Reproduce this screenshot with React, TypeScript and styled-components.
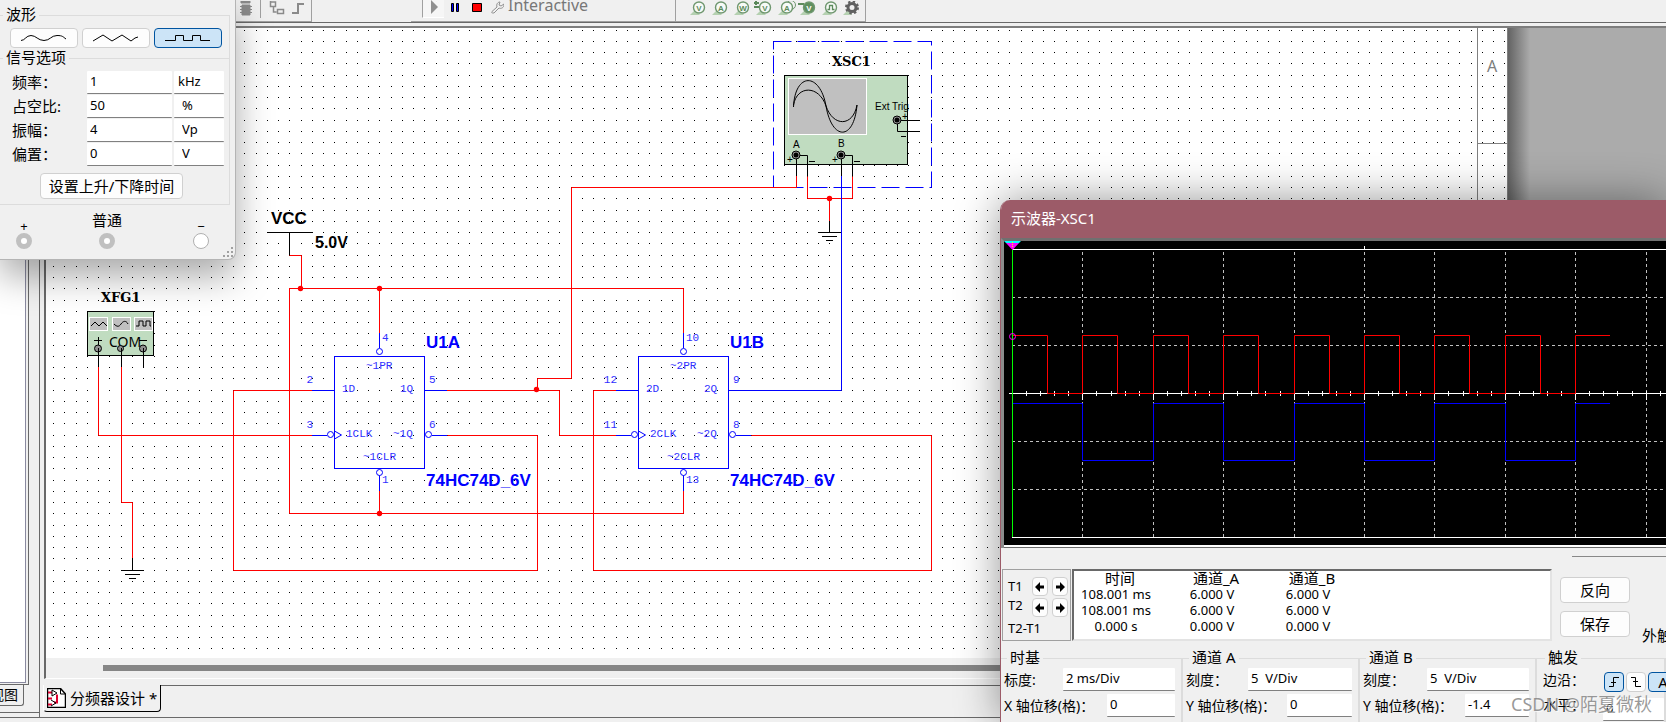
import React from 'react';
import styled, { createGlobalStyle, css } from 'styled-components';

const CJK = `"Noto Sans", "Noto Sans CJK SC", sans-serif`;
const FACE = '#f0f0f0';
const DARK = '#696969';
const ACCENT = '#0054a0';

const GlobalStyle = createGlobalStyle`
  * { box-sizing: border-box; }
  body { margin: 0; overflow: hidden; background: ${FACE}; color: #000; font: 13px/16px ${CJK}; }
  button, input { font: inherit; color: inherit; margin: 0; }
  svg { display: block; }
`;

/* ---------- main window ---------- */

const Desktop = styled.div`
  position: relative;
  display: flex;
  flex-direction: column;
  height: 100vh;
  overflow: hidden;
`;

const Toolbar = styled.header`
  display: flex;
  flex: none;
  height: 23px;
  padding-left: 235px;
  border-bottom: 1px solid ${DARK};
`;

const ToolGroup = styled.div<{ $width: number; $lead?: number }>`
  display: flex;
  flex: none;
  width: ${p => p.$width}px;
  height: 22px;
  margin-left: ${p => p.$lead ?? 0}px;
  border-right: 1px solid #a0a0a0;
  border-bottom: 1px solid #a0a0a0;
`;

const ToolButton = styled.button<{ $width: number; $boxed?: boolean }>`
  flex: none;
  width: ${p => p.$width}px;
  height: ${p => (p.$boxed ? 18 : 21)}px;
  padding: 0;
  border: 0;
  background: none;
  & > svg { margin-top: -2px; }
  ${p => p.$boxed && css`
    background: #f6f6f6;
    border-left: 1px solid #a0a0a0;
    border-bottom: 1px solid #fff;
  `}
`;

const Divider = styled.span`
  width: 1px;
  height: 18px;
  background: #a0a0a0;
`;

const SimulationName = styled.span`
  color: #777;
  font-size: 16px;
  line-height: 11px;
  padding-left: 4px;
`;

const Workspace = styled.div`
  display: flex;
  flex: 1;
  min-height: 0;
`;

const Dock = styled.aside`
  display: flex;
  flex-direction: column;
  flex: none;
  width: 39px;
  margin-bottom: 4px;
  border-bottom: 1px solid ${DARK};
`;

const DockPane = styled.div`
  flex: 1;
  width: 29px;
  border-right: 1px solid ${DARK};
  border-bottom: 1px solid ${DARK};
  padding: 0 2px 2px 0;
  &::before {
    content: '';
    display: block;
    height: 100%;
    background: #fff;
    border-right: 1px solid #8a8aa0;
    border-bottom: 1px solid #8a8aa0;
  }
`;

const DockTab = styled.button`
  display: flex;
  justify-content: flex-end;
  align-items: center;
  width: 24px;
  height: 21px;
  margin-bottom: 6px;
  padding: 0 5px 0 0;
  overflow: hidden;
  background: ${FACE};
  border: 1px solid ${DARK};
  border-width: 0 1px 1px 0;
  border-radius: 0 0 3px 0;
  font-size: 14px;
  white-space: nowrap;
`;

const Mdi = styled.main`
  display: flex;
  flex-direction: column;
  flex: 1;
  min-width: 0;
  padding-top: 3px;
  border-left: 1px solid ${DARK};
`;

const Viewport = styled.div`
  display: flex;
  flex-direction: column;
  flex: 1;
  min-height: 0;
  margin-left: 4px;
  border: 2px solid ${DARK};
  border-right: 0;
  border-bottom: 1px solid #fff;
  border-top-color: #7d7d7d;
`;

const SheetArea = styled.div`
  display: flex;
  flex: 1;
  min-height: 0;
  overflow: hidden;
  background: #ababab;
`;

const Sheet = styled.svg`
  flex: none;
  background: #fff;
`;

const SheetEdge = styled.div`
  width: 22px;
  background: linear-gradient(to right, #636363, #ababab);
`;

const ScrollTrack = styled.div`
  flex: none;
  height: 20px;
  padding: 7px 30% 7px 57px;
  background: ${FACE};
`;

const ScrollThumb = styled.div`
  height: 6px;
  background: #868686;
`;

const TabStrip = styled.div`
  display: flex;
  flex: none;
  height: 38px;
  padding-top: 6px;
`;

const SheetTab = styled.button`
  display: flex;
  align-items: center;
  gap: 4px;
  height: 27px;
  margin-left: 3px;
  padding: 0 3px;
  border: solid #000;
  border-width: 0 1px 1px 1px;
  border-left-color: #fff;
  border-radius: 0 0 4px 4px;
  background: ${FACE};
  font-size: 15px;
  white-space: nowrap;
`;

const StripRest = styled.div`
  flex: 1;
  border-top: 1px solid ${DARK};
`;

const StatusBar = styled.footer`
  flex: none;
  height: 5px;
  border-top: 1px solid ${DARK};
`;

/* ---------- shared window controls ---------- */

const Group = styled.fieldset<{ $indent: number }>`
  min-width: 0;
  margin: 0;
  padding: 0;
  border: 1px solid #dcdcdc;
  border-left-width: 0;
  & > legend {
    height: 20px;
    margin-left: ${p => p.$indent}px;
    padding: 0 3px;
    font-size: 15px;
    line-height: 18px;
  }
`;

const Field = styled.input<{ $pad?: number }>`
  width: 100%;
  min-width: 0;
  height: 23px;
  padding: 0 0 2px ${p => p.$pad ?? 3}px;
  border: 0;
  border-bottom: 1px solid #808080;
  border-radius: 1px;
  outline: 0;
  background: #fff;
`;

const PushButton = styled.button<{ $active?: boolean }>`
  display: flex;
  align-items: center;
  justify-content: center;
  padding: 0;
  border: 1px solid ${p => (p.$active ? ACCENT : '#d0d0d0')};
  border-radius: 4px;
  background: ${p => (p.$active ? '#cce4f7' : '#fdfdfd')};
  font-size: 15px;
  white-space: nowrap;
`;

/* ---------- function generator window ---------- */

const Generator = styled.section`
  position: absolute;
  top: 0;
  left: 0;
  width: 236px;
  height: 260px;
  padding: 5px 5px 0 0;
  background: ${FACE};
  border: 1px solid #b4b4b4;
  border-width: 0 1px 1px 0;
  border-radius: 0 0 8px 0;
  box-shadow: 0 16px 36px rgba(0, 0, 0, 0.34);
`;

const WaveGroup = styled(Group)`
  border-bottom-width: 0;
  padding-bottom: 11px;
`;

const SignalGroup = styled(Group)`
  margin-top: -11px;
  padding-bottom: 5px;
`;

const WaveButtons = styled.div`
  display: flex;
  gap: 4px;
  padding: 3px 0 0 10px;
`;

const WaveButton = styled(PushButton)`
  width: 68px;
  height: 20px;
`;

const ParamRow = styled.div`
  display: grid;
  grid-template-columns: 75px 85px 52px;
  height: 24px;
  padding-left: 12px;
  & > label { font-size: 15px; line-height: 22px; white-space: nowrap; }
  & > :last-child { padding-left: 2px; }
`;

const Params = styled.div`
  padding-top: 3px;
`;

const EdgeTimeButton = styled(PushButton)`
  width: 143px;
  height: 26px;
  margin: 6px 0 0 40px;
`;

const Terminals = styled.div`
  display: grid;
  grid-template-columns: 48px 118px 70px;
  padding-top: 7px;
`;

const Terminal = styled.label<{ $sign?: boolean }>`
  display: flex;
  flex-direction: column;
  align-items: center;
  gap: 1px;
  & > span {
    height: 20px;
    font-size: ${p => (p.$sign ? 13 : 15)}px;
    line-height: ${p => (p.$sign ? 28 : 16)}px;
  }
  & > input {
    appearance: none;
    width: 16px;
    height: 16px;
    border: 5px solid #c0c0c0;
    border-radius: 50%;
    background: #fff;
  }
  & > input:checked { border: 1px solid #b0b0b0; }
`;

const Grip = styled.svg`
  position: absolute;
  right: 1px;
  bottom: 1px;
`;

/* ---------- oscilloscope window ---------- */

const Scope = styled.section`
  position: absolute;
  top: 200px;
  left: 1000px;
  right: 0;
  bottom: 0;
  overflow: hidden;
  background: ${FACE};
  border-left: 1px solid #9c5b68;
  border-radius: 10px 0 0 0;
  box-shadow: 0 0 44px rgba(0, 0, 0, 0.42);
`;

const ScopeTitle = styled.h1`
  height: 38px;
  margin: 0;
  padding-left: 10px;
  background: #9c5b68;
  color: #fff;
  font-size: 15px;
  font-weight: 400;
  line-height: 37px;
`;

const Screen = styled.div`
  height: 310px;
  border: 3px solid #8c8c8c;
  border-top-color: #707070;
  border-right: 0;
  border-bottom: 0;
  background: #000;
  overflow: hidden;
  box-shadow: inset 0 -1px #696969, inset 0 -3px #fff;
`;

const Readouts = styled.div`
  display: flex;
  align-items: flex-start;
  padding: 0 0 0 1px;
`;

const Rule = styled.div`
  height: 9px;
  margin: 8px 0 4px 571px;
  border-top: 1px solid #888;
`;

const Cursors = styled.div`
  display: grid;
  grid-template-columns: 27px 20px 20px;
  grid-template-rows: 21px 21px 22px;
  flex: none;
  width: 69px;
  height: 72px;
  padding-top: 6px;
  border: 1px solid #a0a0a0;
`;

const CursorName = styled.span<{ $line: number }>`
  padding-left: 5px;
  line-height: ${p => p.$line}px;
  white-space: nowrap;
`;

const ArrowButton = styled(PushButton)`
  width: 16px;
  height: 19px;
  margin: 1px 2px;
`;

const Table = styled.table`
  flex: none;
  width: 480px;
  height: 72px;
  margin-left: 1px;
  padding-bottom: 5px;
  border: 2px solid ${DARK};
  border-color: ${DARK} #e3e3e3 #e3e3e3 ${DARK};
  border-collapse: separate;
  border-spacing: 0;
  background: #fff;
  table-layout: fixed;
  th, td { height: 16px; padding: 0; font-weight: 400; text-align: center; line-height: 16px; }
  th { height: 15px; padding-left: 8px; font-size: 15px; line-height: 15px; }
`;

const Actions = styled.div`
  display: flex;
  flex-direction: column;
  flex: none;
  gap: 8px;
  width: 70px;
  margin: 8px 12px 0 8px;
  & > button { height: 26px; }
`;

const External = styled.span`
  padding-top: 58px;
  font-size: 15px;
  white-space: nowrap;
`;

const Settings = styled.div`
  display: grid;
  grid-template-columns: 182px 177px 177px 1fr;
  margin-top: 6px;
`;

const SettingGroup = styled(Group)`
  height: 100px;
  border-right-width: 2px;
  & > legend { height: 19px; line-height: 16px; }
`;

const SettingRow = styled.div<{ $label: number }>`
  display: grid;
  grid-template-columns: ${p => p.$label}px 1fr;
  height: 26px;
  padding: 0 6px 0 3px;
  & > label { font-size: 14px; line-height: 24px; white-space: nowrap; }
`;

const BottomButtons = styled.div`
  display: flex;
  gap: 6px;
  padding: 2px 0 0 10px;
  & > button { width: 38px; height: 24px; font-size: 13px; }
`;

const TriggerRow = styled.div`
  display: grid;
  grid-template-columns: 59px 20px 20px 30px;
  column-gap: 2px;
  height: 30px;
  padding: 4px 0 0 6px;
  & > span { font-size: 14px; line-height: 16px; }
  & > button { height: 20px; }
`;

const TriggerLevel = styled.div`
  display: grid;
  grid-template-columns: 60px 1fr;
  padding-left: 6px;
  & > label { font-size: 14px; line-height: 14px; }
`;

const Watermark = styled.div`
  position: absolute;
  right: 14px;
  bottom: 6px;
  color: rgba(120, 120, 120, 0.75);
  font-size: 18px;
  line-height: 24px;
  text-shadow: 1px 1px rgba(255, 255, 255, 0.7);
  white-space: nowrap;
  pointer-events: none;
`;

/* ---------- drawings ---------- */

function Probe({ letter, extra, filled }: { letter: string; extra?: string; filled?: boolean }) {
  return (
    <svg width="22" height="18" viewBox="0 0 22 18">
      <path d="M2 14 L7 9 L12 14Z" fill="#b4d0b0" />
      {extra === 'ref' && <path d="M0 2h5M0 6h5M2 0v4" stroke="#5c8a5c" strokeWidth="2" />}
      {extra === 'minus' && <path d="M0 3h6" stroke="#5c8a5c" strokeWidth="2" />}
      {extra === 'pair' && <circle cx="15" cy="4" r="4.500" fill="#f0f0f0" stroke="#6f976f" />}
      <circle cx="11" cy="6.500" r="5.500" fill={filled ? '#5f8f5f' : '#f7faf7'} stroke="#6f976f" strokeWidth="1.400" />
      {letter === 'n' ? (
        <path d="M7.500 8.500h2v-4h3v4h2" fill="none" stroke="#5c8a5c" strokeWidth="1.300" />
      ) : (
        <text x="11" y="9.500" textAnchor="middle" fontFamily="Liberation Sans, sans-serif" fontWeight="700" fontSize="8"
          fill={filled ? '#fff' : '#5c8a5c'}>{letter}</text>
      )}
    </svg>
  );
}

function Ground({ x, y }: { x: number; y: number }) {
  return <path d={`M${x - 11.5} ${y}h23M${x - 7.5} ${y + 4}h15M${x - 3.5} ${y + 8}h7`} stroke="#000" fill="none" />;
}

function Jack({ x, y }: { x: number; y: number }) {
  return (
    <g>
      <circle cx={x} cy={y} r="4" fill="#a0a0a0" stroke="#000" />
      <circle cx={x} cy={y} r="2.500" fill="#000" />
    </g>
  );
}

interface FlipFlopProps {
  dx: number;
  unit: string;
  n: number;
  pins: { d: string; clk: string; pr: string; clr: string; q: string; nq: string };
}

function FlipFlop({ dx, unit, n, pins }: FlipFlopProps) {
  const pinEnd = 313;
  return (
    <g transform={`translate(${dx} 0)`}>
      <g fill="none" stroke="#0000ff">
        <rect x="334.500" y="356.500" width="90" height="112" />
        <path d="M379.500 333v15M379.500 475v16M312 390.500h22M312 435.500h15M425 390.500h22M432 435.500h15M334.500 431l7 4l-7 4" />
        <circle cx="379.500" cy="351.500" r="3" fill="#fff" />
        <circle cx="379.500" cy="472.500" r="3" fill="#fff" />
        <circle cx="330.500" cy="434.500" r="3" fill="#fff" />
        <circle cx="428.500" cy="434.500" r="3" fill="#fff" />
      </g>
      <g fontFamily="Liberation Mono, monospace" fontSize="11" fill="#3030ff">
        <text x="366" y="369">{`~${n}PR`}</text>
        <text x="342" y="392">{`${n}D`}</text>
        <text x="400" y="392">{`${n}Q`}</text>
        <text x="346" y="437">{`${n}CLK`}</text>
        <text x="393" y="437">{`~${n}Q`}</text>
        <text x="363" y="460">{`~${n}CLR`}</text>
        <text x={pinEnd} y="383" textAnchor="end">{pins.d}</text>
        <text x={pinEnd} y="428" textAnchor="end">{pins.clk}</text>
        <text x="382" y="341">{pins.pr}</text>
        <text x="382" y="483">{pins.clr}</text>
        <text x="429" y="383">{pins.q}</text>
        <text x="429" y="428">{pins.nq}</text>
      </g>
      <g fontFamily="Liberation Sans, sans-serif" fontWeight="700" fontSize="17" fill="#0000ff">
        <text x="426" y="348">{unit}</text>
        <text x="426" y="486">74HC74D_6V</text>
      </g>
    </g>
  );
}

function Schematic() {
  const dots = [8, 19, 31, 42].flatMap(x => [7, 18, 30, 41].map(y => `M${x} ${y}h1v1h-1z`)).join('');
  return (
    <Sheet width="1462" height="630" role="img" aria-label="Schematic">
      <defs>
        <pattern id="grid" width="45" height="45" patternUnits="userSpaceOnUse">
          <path d={dots} fill="#000" shapeRendering="crispEdges" />
        </pattern>
      </defs>
      <g transform="translate(-46 -28)">
        <rect x="53" y="28" width="1455" height="630" fill="url(#grid)" />
        <path d="M1477.500 28v640M1477.500 143.500h30M1507.500 28v640" stroke="#808080" fill="none" />
        <text x="1487" y="72" fontFamily="Noto Sans, sans-serif" fontSize="16" fill="#808080">A</text>

        <rect x="773.500" y="41.500" width="158" height="146" fill="none" stroke="#0000ff" strokeDasharray="18 6" />

        <g fill="none" stroke="#ff0000">
          <path d="M289.500 255.500h12v33M289.500 288.500h394v45M289.500 288v225.500h394v-23M379.500 288v45M379.500 490v23" />
          <path d="M98.500 367v68.500h214M121.500 367v135.500h11v56" />
          <path d="M313 390.500h-79.500v180h304v-135h-90" />
          <path d="M447 390.500h112.500v45h57M537.500 390v-11.500h34v-191h225v-12" />
          <path d="M616 390.500h-22.500v180h338v-135h-180" />
          <path d="M807.500 176v22.500h45v-22.500M829.500 198v23" />
        </g>
        <path d="M732 390.500h109.500v-215" fill="none" stroke="#0000ff" />
        <g fill="#ff0000">
          <circle cx="300.500" cy="288.500" r="2.700" />
          <circle cx="379.500" cy="288.500" r="2.700" />
          <circle cx="379.500" cy="513.500" r="2.700" />
          <circle cx="536.500" cy="389.500" r="2.700" />
          <circle cx="829.500" cy="198.500" r="2.700" />
        </g>

        <FlipFlop dx={0} unit="U1A" n={1} pins={{ d: '2', clk: '3', pr: '4', clr: '1', q: '5', nq: '6' }} />
        <FlipFlop dx={304} unit="U1B" n={2} pins={{ d: '12', clk: '11', pr: '10', clr: '13', q: '9', nq: '8' }} />

        <g fontFamily="Liberation Sans, sans-serif" fontWeight="700">
          <text x="271" y="224" fontSize="17">VCC</text>
          <text x="315" y="248" fontSize="16">5.0V</text>
        </g>
        <path d="M267 232.500h46M289.500 232v23M132.500 558v12M829.500 221v11" stroke="#000" fill="none" />
        <Ground x={132.5} y={570.5} />
        <Ground x={829.5} y={232.5} />

        <text x="101" y="302" fontFamily="DejaVu Serif, serif" fontWeight="700" fontSize="13">XFG1</text>
        <rect x="87.500" y="311.500" width="66" height="44" fill="#c0dcc0" stroke="#000" />
        <g fill="#c0c0c0" stroke="#fff">
          <rect x="89.500" y="317.500" width="18" height="13" />
          <rect x="112.500" y="317.500" width="18" height="13" />
          <rect x="134.500" y="317.500" width="18" height="13" />
        </g>
        <path d="M91 326l4-4l4 4l4-4l4 4M114 324c3 3 5 3 7 0s5-4 7 0M136 326h3v-5h4v5h3v-5h4v5h1" fill="none" stroke="#000" />
        <text x="109" y="347" fontFamily="Noto Sans, sans-serif" fontSize="14">COM</text>
        <path d="M94 340.500h8M98.500 337v8M139 340.500h8" stroke="#000" />
        <g fill="#909090" stroke="#000">
          <circle cx="98" cy="348.500" r="3.500" />
          <circle cx="120.500" cy="348.500" r="3" />
          <circle cx="143" cy="348.500" r="3.500" />
        </g>
        <path d="M98.500 348v19M121.500 348v19M143.500 348v19" stroke="#000" />

        <text x="832" y="66" fontFamily="DejaVu Serif, serif" fontWeight="700" fontSize="13">XSC1</text>
        <rect x="784.500" y="75.500" width="123" height="89" fill="#c0dcc0" stroke="#000" />
        <rect x="788.500" y="78.500" width="78" height="56" fill="#c0c0c0" stroke="#fff" />
        <path d="M793.500 107C795 72 820 72 826 106C832 141 854 141 857 105M793.500 105C797 85 819 85 826 106C833 127 853 127 857 105" fill="none" stroke="#000" />
        <g fontFamily="Liberation Sans, sans-serif" fontSize="10">
          <text x="875" y="110">Ext Trig</text>
          <text x="793" y="148">A</text>
          <text x="838" y="147">B</text>
          <text x="787" y="163">+</text>
          <text x="832" y="163">+</text>
          <text x="902" y="120">+</text>
        </g>
        <path d="M809 161.500h6M854 161.500h6M901 136.500h5" stroke="#000" />
        <path d="M796.500 155v21M797 155.500h10.500v21M841.500 155v21M842 155.500h10.500v21M898 120.500h22M897.500 121v10.500h22.500" fill="none" stroke="#000" />
        <Jack x={796} y={155} />
        <Jack x={841} y={155} />
        <Jack x={897} y={120} />
      </g>
    </Sheet>
  );
}

function Traces() {
  const divs = [1082, 1153, 1223, 1294, 1364, 1434, 1505, 1575, 1646];
  const edges = [1012, ...divs];
  let red = 'M1012 335.5';
  let blue = 'M1012 403.5';
  for (let i = 0; i < 8; i++) {
    red += `H${edges[i] + 35.5}V393.5H${edges[i + 1] + 0.5}V335.5`;
    blue += `H${edges[i + 1] + 0.5}V${i % 2 ? 403.5 : 460.5}`;
  }
  let ticks = '';
  for (let i = 1; i <= 46; i++) ticks += `M${Math.round(1012 + i * 14.08) + 0.5} 391v5`;
  return (
    <svg width="100%" height="304" role="img" aria-label="Oscilloscope traces">
      <g transform="translate(-1004 -241)" fill="none">
        <g stroke="#c0c0c0" strokeDasharray="3 3">
          {divs.map(x => <path key={x} d={`M${x + 0.5} 252V537`} />)}
          {[297, 345, 441, 489].map(y => <path key={y} d={`M1012 ${y + 0.5}H1665`} />)}
        </g>
        <path d={`M1012 249.500H1700M1012 537.500H1700M1009 393.500H1700M1364.500 246v4${divs.map(x => `M${x + 0.5} 393v7`).join('')}${ticks}`} stroke="#fff" />
        <path d={`${red}H1610`} stroke="#ff0000" />
        <path d={`${blue}H1610`} stroke="#0000ff" />
        <path d="M1012.500 249V537" stroke="#00ff00" />
        <path d="M1004 241h17l-2 2h-13z" fill="#00ffff" />
        <path d="M1006 243h13l-6.500 7z" fill="#ff00ff" />
        <path d="M1012.500 242v5" stroke="#ffff00" strokeDasharray="1 1" />
        <circle cx="1012.500" cy="336.500" r="3" stroke="#ff00ff" />
      </g>
    </svg>
  );
}

const Arrow = ({ flip }: { flip?: boolean }) => (
  <svg width="10" height="10" viewBox="0 0 10 10">
    <path d={flip ? 'M10 5L5 0V3.500H1v3h4V10z' : 'M0 5L5 0V3.500h4v3H5V10z'} fill="#000" />
  </svg>
);

const WAVES = [
  { name: 'Sine', d: 'M0 8.500C4 8.500 5 3.500 10 3.500S17 8.500 23 8.500S30 3.500 36 3.500S42 5 45 7' },
  { name: 'Triangle', d: 'M0 9L10 3L19 9L29 3L38 9L42 6L45 5' },
  { name: 'Square', d: 'M0 8.500H10.500V3.500H18.500V8.500H27.500V3.500H35.500V8.500H45' },
];

const PARAMS = [
  { id: 'freq', label: '频率：', value: '1', unit: 'kHz', pad: 4 },
  { id: 'duty', label: '占空比:', value: '50', unit: '%', pad: 8 },
  { id: 'amp', label: '振幅：', value: '4', unit: 'Vp', pad: 8 },
  { id: 'offset', label: '偏置：', value: '0', unit: 'V', pad: 8 },
];

const CHANNELS = [
  { id: 'time', title: '时基', scale: '标度:', scaleValue: '2 ms/Div', scaleLabel: 59, shift: 'X 轴位移(格)：', shiftValue: '0', shiftLabel: 103 },
  { id: 'cha', title: '通道 A', scale: '刻度：', scaleValue: '5  V/Div', scaleLabel: 62, shift: 'Y 轴位移(格)：', shiftValue: '0', shiftLabel: 101 },
  { id: 'chb', title: '通道 B', scale: '刻度：', scaleValue: '5  V/Div', scaleLabel: 64, shift: 'Y 轴位移(格)：', shiftValue: '-1.4', shiftLabel: 102 },
];

const ROWS = [
  ['108.001 ms', '6.000 V', '6.000 V'],
  ['108.001 ms', '6.000 V', '6.000 V'],
  ['0.000 s', '0.000 V', '0.000 V'],
];

function GeneratorWindow() {
  return (
    <Generator aria-label="Function generator">
      <WaveGroup $indent={3}>
        <legend>波形</legend>
        <WaveButtons>
          {WAVES.map((w, i) => (
            <WaveButton key={w.name} $active={i === 2} aria-label={w.name}>
              <svg width="46" height="12"><path d={w.d} fill="none" stroke="#000" /></svg>
            </WaveButton>
          ))}
        </WaveButtons>
      </WaveGroup>
      <SignalGroup $indent={3}>
        <legend>信号选项</legend>
        <Params>
          {PARAMS.map(p => (
            <ParamRow key={p.id}>
              <label htmlFor={p.id}>{p.label}</label>
              <Field id={p.id} defaultValue={p.value} />
              <div><Field aria-label={`${p.label} unit`} defaultValue={p.unit} $pad={p.pad} /></div>
            </ParamRow>
          ))}
        </Params>
        <EdgeTimeButton>设置上升/下降时间</EdgeTimeButton>
      </SignalGroup>
      <Terminals>
        <Terminal $sign><span>+</span><input type="radio" name="plus" /></Terminal>
        <Terminal><span>普通</span><input type="radio" name="common" /></Terminal>
        <Terminal $sign><span>−</span><input type="radio" name="minus" defaultChecked /></Terminal>
      </Terminals>
      <Grip width="11" height="11">
        <path d="M8 0h2v2h-2zM4 4h2v2h-2zM8 4h2v2h-2zM0 8h2v2h-2zM4 8h2v2h-2zM8 8h2v2h-2z" fill="#a0a0a0" />
      </Grip>
    </Generator>
  );
}

function ScopeWindow() {
  return (
    <Scope aria-label="Oscilloscope">
      <ScopeTitle>示波器-XSC1</ScopeTitle>
      <Screen><Traces /></Screen>
      <Rule />
      <Readouts>
        <Cursors>
          <CursorName $line={20}>T1</CursorName>
          <ArrowButton aria-label="T1 left"><Arrow /></ArrowButton>
          <ArrowButton aria-label="T1 right"><Arrow flip /></ArrowButton>
          <CursorName $line={16}>T2</CursorName>
          <ArrowButton aria-label="T2 left"><Arrow /></ArrowButton>
          <ArrowButton aria-label="T2 right"><Arrow flip /></ArrowButton>
          <CursorName $line={20}>T2-T1</CursorName>
        </Cursors>
        <Table>
          <colgroup>
            <col style={{ width: 84 }} /><col style={{ width: 108 }} /><col style={{ width: 84 }} /><col />
          </colgroup>
          <thead><tr><th>时间</th><th>通道_A</th><th>通道_B</th><th /></tr></thead>
          <tbody>
            {ROWS.map((r, i) => <tr key={i}>{r.map((c, j) => <td key={j}>{c}</td>)}<td /></tr>)}
          </tbody>
        </Table>
        <Actions>
          <PushButton>反向</PushButton>
          <PushButton>保存</PushButton>
        </Actions>
        <External>外触发</External>
      </Readouts>
      <Settings>
        {CHANNELS.map(c => (
          <SettingGroup key={c.id} $indent={6}>
            <legend>{c.title}</legend>
            <SettingRow $label={c.scaleLabel}>
              <label htmlFor={`${c.id}-scale`}>{c.scale}</label>
              <Field id={`${c.id}-scale`} defaultValue={c.scaleValue} />
            </SettingRow>
            <SettingRow $label={c.shiftLabel}>
              <label htmlFor={`${c.id}-shift`}>{c.shift}</label>
              <Field id={`${c.id}-shift`} defaultValue={c.shiftValue} />
            </SettingRow>
            <BottomButtons>
              <PushButton $active aria-label="Mode" />
              <PushButton aria-label="Zero" />
              <PushButton aria-label="Coupling" />
            </BottomButtons>
          </SettingGroup>
        ))}
        <SettingGroup $indent={8}>
          <legend>触发</legend>
          <TriggerRow>
            <span>边沿：</span>
            <PushButton $active aria-label="Rising edge">
              <svg width="10" height="12"><path d="M0 10.500H4.500V1.500H10M2 6.500h5M4.500 4v3" fill="none" stroke="#000" /></svg>
            </PushButton>
            <PushButton aria-label="Falling edge">
              <svg width="10" height="12"><path d="M0 1.500H4.500V10.500H10M2 5.500h5M4.500 5v3" fill="none" stroke="#000" /></svg>
            </PushButton>
            <PushButton $active>A</PushButton>
          </TriggerRow>
          <TriggerLevel>
            <label htmlFor="level">水平：</label>
            <Field id="level" defaultValue="0" />
          </TriggerLevel>
        </SettingGroup>
      </Settings>
    </Scope>
  );
}

export default function App() {
  return (
    <Desktop>
      <GlobalStyle />
      <Toolbar>
        <ToolGroup $width={77}>
          <ToolButton $width={25} aria-label="Component">
            <svg width="22" height="18"><path d="M7 4h8v10h-8zM5 5.500h12M5 8.500h12M5 11.500h12M6 0h9v2h-9z" fill="#8a8a8a" stroke="#8a8a8a" /></svg>
          </ToolButton>
          <Divider />
          <ToolButton $width={26} aria-label="Hierarchy">
            <svg width="26" height="18"><path d="M9.500 0v5.500h5V1h-5M12.500 6v5h3M16.500 8.500h6v4h-6z" fill="none" stroke="#8a8a8a" strokeWidth="1.500" /></svg>
          </ToolButton>
          <ToolButton $width={20} aria-label="Bus">
            <svg width="20" height="18"><path d="M5 12h6V3h6" fill="none" stroke="#8a8a8a" strokeWidth="2" /></svg>
          </ToolButton>
        </ToolGroup>
        <ToolGroup $lead={99} $width={265}>
          <ToolButton $width={11} aria-label="Grip" />
          <ToolButton $width={22} $boxed aria-label="Run">
            <svg width="20" height="17"><path d="M8 1V15L15 8z" fill="#909090" /></svg>
          </ToolButton>
          <ToolButton $width={22} aria-label="Pause">
            <svg width="22" height="18"><path d="M7.500 2.500h2v8h-2zM12.500 2.500h2v8h-2z" fill="#0000ff" stroke="#000" /></svg>
          </ToolButton>
          <ToolButton $width={22} aria-label="Stop">
            <svg width="22" height="18"><path d="M6.500 2.500h9v8h-9z" fill="#ff0000" stroke="#000" /></svg>
          </ToolButton>
          <ToolButton $width={16} aria-label="Settings">
            <svg width="16" height="18"><path d="M4 10.500L9 6C8 3 10 1 12 1L11 4l2 1l3-2c0 4-3 5-5 4L6 12C4 12 3 12 4 10.500z" fill="none" stroke="#909090" /></svg>
          </ToolButton>
          <SimulationName>Interactive</SimulationName>
        </ToolGroup>
        <ToolGroup $width={190}>
          <ToolButton $width={12} aria-label="Grip" />
          <ToolButton $width={22} aria-label="Voltage probe"><Probe letter="V" /></ToolButton>
          <ToolButton $width={22} aria-label="Current probe"><Probe letter="A" /></ToolButton>
          <ToolButton $width={22} aria-label="Power probe"><Probe letter="W" /></ToolButton>
          <ToolButton $width={22} aria-label="Differential probe"><Probe letter="V" extra="ref" /></ToolButton>
          <ToolButton $width={22} aria-label="Voltage and current probe"><Probe letter="A" extra="pair" /></ToolButton>
          <ToolButton $width={22} aria-label="Reference probe"><Probe letter="V" extra="minus" filled /></ToolButton>
          <ToolButton $width={22} aria-label="Digital probe"><Probe letter="n" /></ToolButton>
          <ToolButton $width={22} aria-label="Probe settings">
            <svg width="22" height="18">
              <path d="M1 14L6 9L10 14Z" fill="#b4d0b0" />
              <circle cx="10" cy="6.500" r="4" fill="none" stroke="#606060" strokeWidth="3" />
              <circle cx="10" cy="6.500" r="6" fill="none" stroke="#606060" strokeWidth="2" strokeDasharray="2.400 2.310" />
            </svg>
          </ToolButton>
        </ToolGroup>
      </Toolbar>
      <Workspace>
        <Dock>
          <DockPane />
          <DockTab>视图</DockTab>
        </Dock>
        <Mdi>
          <Viewport>
            <SheetArea>
              <Schematic />
              <SheetEdge />
            </SheetArea>
            <ScrollTrack><ScrollThumb /></ScrollTrack>
          </Viewport>
          <TabStrip>
            <SheetTab>
              <svg width="19" height="20">
                <path d="M0.500 0.500H13.500L18.500 6V19.500H0.500z" fill="#fff" stroke="#000" strokeWidth="1.500" />
                <path d="M13.500 1V6H18" fill="none" stroke="#000" />
                <path d="M1 4.500h4M1 10.500h4M1 16.500h4M10 6.500v8h-3" fill="none" stroke="#e00030" strokeWidth="2" />
                <path d="M5 2L10 5L5 8zM4 12L9 15L4 18" fill="none" stroke="#000" />
              </svg>
              分频器设计 *
            </SheetTab>
            <StripRest />
          </TabStrip>
        </Mdi>
      </Workspace>
      <StatusBar />
      <ScopeWindow />
      <GeneratorWindow />
      <Watermark>CSDN @陌夏微秋</Watermark>
    </Desktop>
  );
}
